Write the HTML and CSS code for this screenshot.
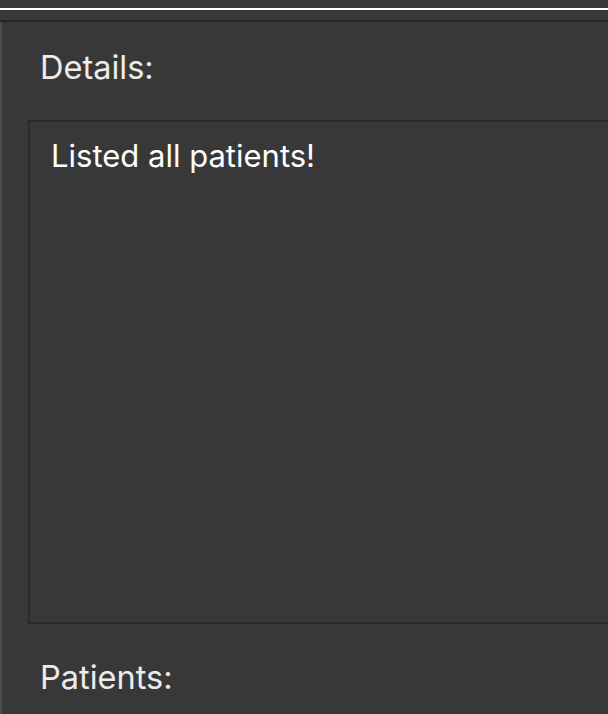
FILE: index.html
```html
<!DOCTYPE html>
<html>
<head>
<meta charset="utf-8">
<link rel="stylesheet" href="styles.css">
</head>
<body>
<div class="top-area"></div>
<div class="top-rule"></div>
<div class="top-gap"></div>
<div class="top-dark"></div>
<div class="main">
  <div class="strip"></div>
  <div class="panel">
    <div class="label label-details">Details:</div>
    <div class="result-box">
      <div class="result-text">Listed all patients!</div>
    </div>
    <div class="label label-patients">Patients:</div>
  </div>
</div>
</body>
</html>
```
FILE: styles.css
```css
html, body {
  margin: 0;
  padding: 0;
  background: #383838;
  overflow: hidden;
  height: 714px;
  font-family: Inter, "Noto Sans", sans-serif;
}
.top-area { height: 8px; background: #383838; }
.top-rule { height: 2px; background: #ffffff; }
.top-gap { height: 10px; background: #383838; }
.top-dark { height: 2px; background: #262626; }
.main {
  display: flex;
  height: 692px;
}
.strip {
  width: 2px;
  background: #4a4a4a;
  flex: none;
}
.panel {
  flex: 1;
  padding: 26px 0 0 26px;
  display: flex;
  flex-direction: column;
  min-width: 0;
}
.label {
  font-size: 32.5px;
  line-height: 40px;
  color: #ececec;
  margin-left: 12px;
}
.result-box {
  margin-top: 32px;
  height: 484px;
  flex: none;
  border: 2px solid #2a2a2a;
  margin-right: -30px;
  padding: 16px 0 0 21px;
  box-sizing: content-box;
}
.result-text {
  font-size: 31px;
  line-height: 36px;
  color: #ffffff;
}
.label-patients {
  margin-top: 34px;
}
```
